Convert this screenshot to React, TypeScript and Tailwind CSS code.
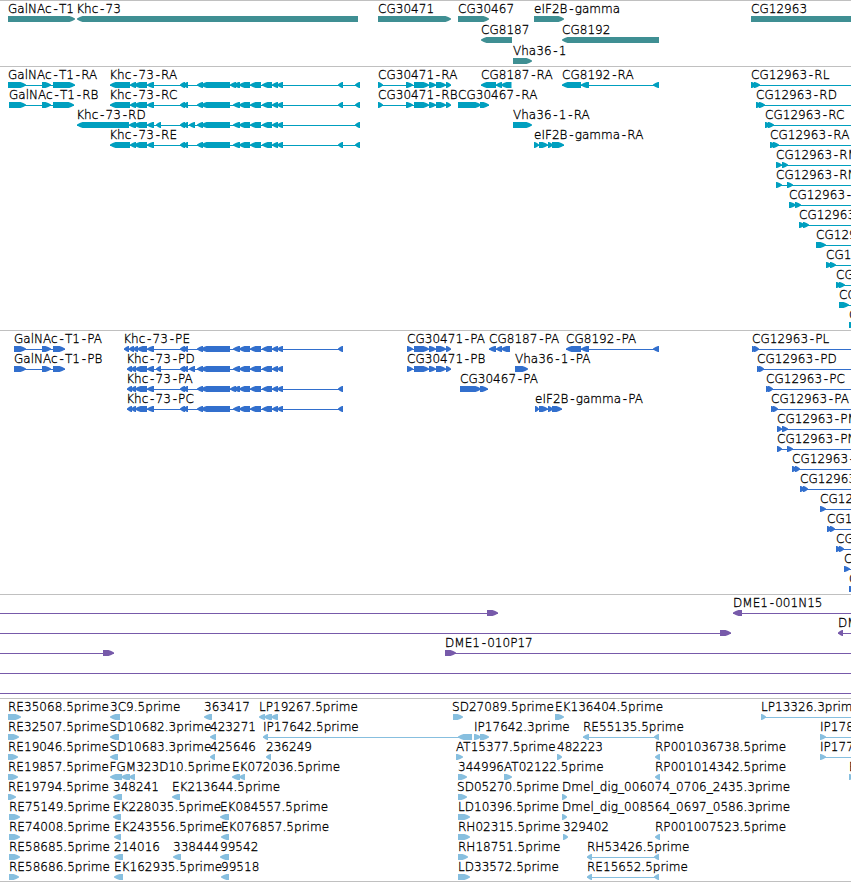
import React from 'react';

type Exon = [number, number];
type Feature = {
  row: number;
  label?: string;
  at?: number;
  dir: 'l' | 'r';
  exons: Exon[];
  line?: Exon;
};

const f = (
  row: number,
  label: string | undefined,
  at: number,
  dir: 'l' | 'r',
  exons: Exon[],
  line?: Exon,
): Feature => ({ row, label, at, dir, exons, line });

/* One exon block: a bar whose leading end tapers to a blunt point. */
function exonPoints([a, b]: Exon, dir: 'l' | 'r', y: number) {
  const head = Math.min(b - a - 1, 5.5);
  if (dir === 'r') {
    const s = b - head;
    return `${a},${y} ${s},${y} ${s + head * 0.5},${y + 1} ${b},${y + 2.4} ${b},${y + 3.6} ${s + head * 0.5},${y + 5} ${s},${y + 6} ${a},${y + 6}`;
  }
  const s = a + head;
  return `${b},${y} ${s},${y} ${s - head * 0.5},${y + 1} ${a},${y + 2.4} ${a},${y + 3.6} ${s - head * 0.5},${y + 5} ${s},${y + 6} ${b},${y + 6}`;
}

function Label({ x, y, text }: { x: number; y: number; text: string }) {
  return (
    <text x={text.startsWith('K') ? x - 0.8 : x} y={y} className="fill-black stroke-black [stroke-width:0.3px]">
      {text.split(/(-)/).map((part, i) =>
        part === '-' ? (
          <tspan key={i} className="stroke-none font-['Liberation_Mono',monospace] text-[13px] tracking-[-0.6px]">-</tspan>
        ) : (
          part
        ),
      )}
    </text>
  );
}

function Track({
  features,
  pitch = 20,
  height,
  color,
}: {
  features: Feature[];
  pitch?: number;
  height: string;
  color: string;
}) {
  return (
    <section className={`w-full shrink-0 border-t border-[#c0c0c0] ${height} ${color}`}>
      <svg
        width="851"
        height="100%"
        className="block overflow-visible font-['DejaVu_Sans',sans-serif] text-[12px] font-extralight tracking-[0.03px]"
      >
        {features.map((ft, i) => {
          const y = 15 + ft.row * pitch;
          return (
            <g key={i}>
              {ft.line && (
                <rect
                  x={ft.line[0]}
                  y={y + 3}
                  width={ft.line[1] - ft.line[0]}
                  height="1"
                  fill="currentColor"
                />
              )}
              {ft.exons.map((e, j) => (
                <polygon key={j} points={exonPoints(e, ft.dir, y)} fill="currentColor" />
              ))}
              {ft.label && <Label x={ft.at ?? 0} y={y - 3} text={ft.label} />}
            </g>
          );
        })}
      </svg>
    </section>
  );
}

const genes: Feature[] = [
  f(0, 'GalNAc-T1', 8, 'r', [[8, 75]]),
  f(0, 'Khc-73', 77, 'l', [[77, 358]]),
  f(0, 'CG30471', 378, 'r', [[378, 451]]),
  f(0, 'CG30467', 458, 'r', [[458, 489]]),
  f(0, 'eIF2B-gamma', 534, 'r', [[534, 564]]),
  f(0, 'CG12963', 751, 'r', [[751, 870]]),
  f(1, 'CG8187', 481, 'l', [[481, 512]]),
  f(1, 'CG8192', 562, 'l', [[562, 659]]),
  f(2, 'Vha36-1', 513, 'r', [[513, 532]]),
];

const mid: Exon[] = [[180, 185], [183, 188]];
const core: Exon[] = [[197, 203], [201, 230]];
const tail: Exon[] = [[233, 240], [239, 250], [250, 261], [262, 272], [272, 278], [277, 283]];
const utr: Exon[] = [[110, 130], [130, 136], [134, 147], [147, 154]];
const cds: Exon[] = [[127, 132], [131, 136], [135, 147], [147, 154]];
const first: Exon = [338, 343];
const last: Exon = [355, 360];
const cg71: Exon[] = [[406, 413], [414, 429], [429, 436], [436, 446], [446, 451]];

const transcripts: Feature[] = [
  f(0, 'GalNAc-T1-RA', 8, 'r', [[8, 26], [42, 51], [53, 75]], [8, 75]),
  f(1, 'GalNAc-T1-RB', 9, 'r', [[9, 26], [42, 51], [53, 74]], [9, 74]),
  f(0, 'Khc-73-RA', 110, 'l', [...utr, ...mid, ...core, [230, 236], ...tail, first, last], [110, 360]),
  f(1, 'Khc-73-RC', 110, 'l', [...utr, ...mid, ...core, ...tail, first, last], [110, 360]),
  f(2, 'Khc-73-RD', 77, 'l', [[77, 129], [129, 136], [134, 147], [147, 154], [156, 161], ...mid, [189, 195], ...core, ...tail, last], [77, 360]),
  f(3, 'Khc-73-RE', 110, 'l', [...utr, ...mid, ...core, ...tail, first, last], [110, 360]),
  f(0, 'CG30471-RA', 378, 'r', [[378, 383], ...cg71], [378, 451]),
  f(1, 'CG30471-RB', 378, 'r', [[378, 383], ...cg71], [378, 451]),
  f(0, 'CG8187-RA', 481, 'l', [[481, 496], [496, 502], [501, 511.5]], [481, 511]),
  f(1, 'CG30467-RA', 458, 'r', [[458, 481], [480, 489]], [458, 489]),
  f(2, 'Vha36-1-RA', 513, 'r', [[513, 532]]),
  f(3, 'eIF2B-gamma-RA', 534, 'r', [[534, 539], [539, 548], [548, 553], [552, 564]], [534, 564]),
  f(0, 'CG8192-RA', 562, 'l', [[562, 581], [581, 589], [653, 659]], [562, 659]),
  f(0, 'CG12963-RL', 751, 'r', [[751, 757], [754, 760]], [751, 851]),
  f(1, 'CG12963-RD', 756, 'r', [[756, 762], [759, 765]], [756, 851]),
  f(2, 'CG12963-RC', 765, 'r', [[765, 771], [768, 774]], [765, 851]),
  f(3, 'CG12963-RA', 770, 'r', [[770, 776], [773, 779]], [770, 851]),
  f(4, 'CG12963-RM', 776, 'r', [[776, 782], [782, 788]], [776, 851]),
  f(5, 'CG12963-RN', 776, 'r', [[776, 782], [787, 793]], [776, 851]),
  f(6, 'CG12963-', 789, 'r', [[789, 796], [795, 801]], [789, 851]),
  f(7, 'CG12963-', 799, 'r', [[799, 805], [803, 809]], [799, 851]),
  f(8, 'CG12963', 816, 'r', [[816, 826]], [816, 851]),
  f(9, 'CG12963', 826, 'r', [[826, 832], [830, 836]], [826, 851]),
  f(10, 'CG12963', 836, 'r', [[836, 842], [839, 845]], [836, 851]),
  f(11, 'CG12963', 839, 'r', [[839, 849]], [839, 851]),
  f(12, 'CG12963', 849, 'r', [[849, 856]], [849, 851]),
];

const proteins: Feature[] = [
  f(0, 'GalNAc-T1-PA', 14, 'r', [[14, 26], [42, 51], [53, 65]], [14, 65]),
  f(1, 'GalNAc-T1-PB', 14, 'r', [[14, 26], [42, 51], [53, 65]], [14, 65]),
  f(0, 'Khc-73-PE', 124, 'l', [[124, 129], [129, 134], [133, 138], [137, 147], [147, 154], ...mid, ...core, ...tail, first], [124, 343]),
  f(1, 'Khc-73-PD', 127, 'l', [...cds, [156, 161], ...mid, [189, 195], ...core, ...tail], [127, 283]),
  f(2, 'Khc-73-PA', 127, 'l', [...cds, ...mid, ...core, [230, 236], ...tail, first], [127, 343]),
  f(3, 'Khc-73-PC', 127, 'l', [...cds, ...mid, ...core, ...tail, first], [127, 343]),
  f(0, 'CG30471-PA', 407, 'r', [[407, 413], ...cg71.slice(1)], [407, 451]),
  f(1, 'CG30471-PB', 407, 'r', [[407, 413], ...cg71.slice(1)], [407, 451]),
  f(2, 'CG30467-PA', 460, 'r', [[460, 481], [480, 488]], [460, 488]),
  f(0, 'CG8187-PA', 489, 'l', [[489, 496], [496, 502], [501, 510]], [489, 510]),
  f(1, 'Vha36-1-PA', 515, 'r', [[515, 528]]),
  f(3, 'eIF2B-gamma-PA', 535, 'r', [[535, 539], [539, 548], [548, 553], [552, 562]], [535, 562]),
  f(0, 'CG8192-PA', 566, 'l', [[566, 581], [581, 589], [653, 659]], [566, 659]),
  f(0, 'CG12963-PL', 752, 'r', [[752, 757], [754, 759]], [752, 851]),
  f(1, 'CG12963-PD', 757, 'r', [[757, 762], [759, 764]], [757, 851]),
  f(2, 'CG12963-PC', 766, 'r', [[766, 771], [768, 773]], [766, 851]),
  f(3, 'CG12963-PA', 771, 'r', [[771, 776], [773, 778]], [771, 851]),
  f(4, 'CG12963-PM', 777, 'r', [[777, 782], [782, 788]], [777, 851]),
  f(5, 'CG12963-PN', 777, 'r', [[777, 782], [787, 793]], [777, 851]),
  f(6, 'CG12963-', 792, 'r', [[792, 797], [795, 800]], [792, 851]),
  f(7, 'CG12963-', 800, 'r', [[800, 805], [803, 808]], [800, 851]),
  f(8, 'CG12963', 820, 'r', [[820, 826]], [820, 851]),
  f(9, 'CG12963', 827, 'r', [[827, 832], [830, 835]], [827, 851]),
  f(10, 'CG12963', 836, 'r', [[836, 841], [839, 844]], [836, 851]),
  f(11, 'CG12963', 844, 'r', [[844, 850]], [844, 851]),
  f(12, 'CG12963', 849, 'r', [[849, 856]], [849, 851]),
];

const clones: Feature[] = [
  f(0, undefined, 0, 'r', [[487, 498]], [0, 498]),
  f(0, 'DME1-001N15', 733, 'l', [[733, 742]], [733, 851]),
  f(1, undefined, 0, 'r', [[720, 731]], [0, 731]),
  f(1, 'DME1', 838, 'l', [[838, 843]], [838, 851]),
  f(2, undefined, 0, 'r', [[103, 114]], [0, 114]),
  f(2, 'DME1-010P17', 445, 'r', [[445, 456]], [445, 851]),
  f(3, undefined, 0, 'r', [], [0, 851]),
  f(4, undefined, 0, 'r', [], [0, 851]),
];

const ests: Feature[] = [
  f(0, 'RE35068.5prime', 8, 'r', [[8, 21]]),
  f(1, 'RE32507.5prime', 8, 'r', [[8, 19]]),
  f(2, 'RE19046.5prime', 8, 'r', [[8, 18]]),
  f(3, 'RE19857.5prime', 8, 'r', [[8, 18]]),
  f(4, 'RE19794.5prime', 8, 'r', [[8, 16]]),
  f(5, 'RE75149.5prime', 9, 'r', [[9, 20]]),
  f(6, 'RE74008.5prime', 9, 'r', [[9, 20]]),
  f(7, 'RE58685.5prime', 9, 'r', [[9, 20]]),
  f(8, 'RE58686.5prime', 9, 'r', [[9, 19]]),
  f(0, '3C9.5prime', 110, 'l', [[110, 120]]),
  f(1, 'SD10682.3prime', 109.5, 'l', [[110, 119]]),
  f(2, 'SD10683.3prime', 109.5, 'l', [[110, 118]]),
  f(3, 'FGM323D10.5prime', 109.5, 'l', [[110, 122], [121, 130], [129, 135]]),
  f(4, '348241', 113, 'l', [[113, 122]]),
  f(5, 'EK228035.5prime', 113, 'l', [[113, 121]]),
  f(6, 'EK243556.5prime', 114, 'l', [[114, 121]]),
  f(7, '214016', 114, 'l', [[114, 123]]),
  f(8, 'EK162935.5prime', 114, 'l', [[114, 123]]),
  f(4, 'EK213644.5prime', 172, 'l', [[172, 180]]),
  f(7, '338444', 173, 'l', [[173, 181]]),
  f(0, '363417', 204, 'l', [[204, 212]]),
  f(1, '423271', 210, 'l', [[210, 216]]),
  f(2, '425646', 210, 'l', [[210, 215]]),
  f(3, 'EK072036.5prime', 232, 'l', [[232, 240], [239, 245]]),
  f(5, 'EK084557.5prime', 220, 'l', [[220, 229]]),
  f(6, 'EK076857.5prime', 221, 'l', [[221, 229]]),
  f(7, '99542', 220, 'l', [[220, 229]]),
  f(8, '99518', 221, 'l', [[221, 229]]),
  f(0, 'LP19267.5prime', 259, 'l', [[259, 265], [264, 272], [271, 278]]),
  f(1, 'IP17642.5prime', 263, 'l', [[263, 268], [458, 472]], [263, 472]),
  f(2, '236249', 266, 'l', [[266, 271]]),
  f(0, 'SD27089.5prime', 452, 'r', [[453, 463]]),
  f(1, 'IP17642.3prime', 474, 'r', [[474, 481], [480, 489]]),
  f(2, 'AT15377.5prime', 456, 'r', [[456, 463]]),
  f(3, '344996', 458, 'r', [[458, 467]]),
  f(4, 'SD05270.5prime', 457, 'r', [[458, 467]]),
  f(5, 'LD10396.5prime', 458, 'r', [[458, 470]]),
  f(6, 'RH02315.5prime', 458, 'r', [[458, 470]]),
  f(7, 'RH18751.5prime', 458, 'r', [[458, 468]]),
  f(8, 'LD33572.5prime', 458, 'r', [[458, 470]]),
  f(0, 'EK136404.5prime', 555, 'r', [[555, 564]]),
  f(2, '482223', 557, 'r', [[557, 562]]),
  f(3, 'AT02122.5prime', 504, 'r', [[504, 512]]),
  f(4, 'Dmel_dig_006074_0706_2435.3prime', 562, 'r', [[562, 567]]),
  f(5, 'Dmel_dig_008564_0697_0586.3prime', 562, 'r', [[562, 567]]),
  f(6, '329402', 563, 'r', [[563, 568]]),
  f(1, 'RE55135.5prime', 583, 'l', [[583, 589], [654, 659]], [583, 659]),
  f(7, 'RH53426.5prime', 587, 'l', [[587, 592], [654, 659]], [587, 659]),
  f(8, 'RE15652.5prime', 587, 'l', [[587, 592], [654, 659]], [587, 659]),
  f(2, 'RP001036738.5prime', 655, 'l', [[655, 660]]),
  f(3, 'RP001014342.5prime', 655, 'l', [[655, 660]]),
  f(6, 'RP001007523.5prime', 655, 'l', [[655, 660]]),
  f(0, 'LP13326.3prime', 761, 'r', [[761, 766]], [761, 851]),
  f(1, 'IP178', 820, 'r', [[820, 826]], [820, 851]),
  f(2, 'IP177', 820, 'r', [[820, 826]], [820, 851]),
  f(3, 'E', 849, 'r', [[849, 855]], [849, 851]),
];

export default function App() {
  return (
    <main className="flex h-[882px] w-[851px] flex-col overflow-hidden bg-white">
      <Track features={genes} pitch={21} height="h-[66px]" color="text-[#3f8f93]" />
      <Track features={transcripts} height="h-[264px]" color="text-[#009fbf]" />
      <Track features={proteins} height="h-[264px]" color="text-[#326fcd]" />
      <Track features={clones} height="h-[104px]" color="text-[#775aaa]" />
      <Track features={ests} height="h-[183px]" color="text-[#87bfdf]" />
      <div className="h-px w-full shrink-0 bg-[#c0c0c0]" />
    </main>
  );
}
